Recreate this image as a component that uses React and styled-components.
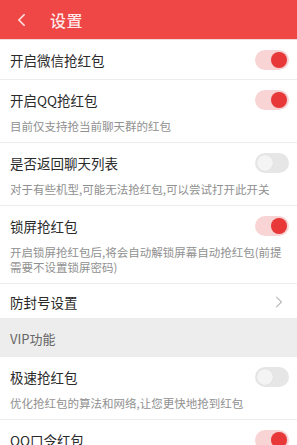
import styled, { createGlobalStyle } from 'styled-components';

const GlobalStyle = createGlobalStyle`
  html, body {
    margin: 0;
    padding: 0;
    background: #ffffff;
    font-family: "Noto Sans CJK SC", "Noto Sans", sans-serif;
  }
`;

const Page = styled.div`
  width: 297px;
  height: 445px;
  background: #fff;
  overflow: hidden;
`;

const Header = styled.header`
  height: 40px;
  background: #ef4646;
  display: flex;
  align-items: center;
  padding-left: 17px;
  gap: 24px;
  box-sizing: border-box;
  border-bottom: 1px solid #f0dada;
`;

const HeaderTitle = styled.h1`
  margin: 0;
  font-size: 16px;
  font-weight: 500;
  color: rgba(255, 255, 255, 0.9);
  letter-spacing: 0.5px;
`;

const Row = styled.div`
  padding: ${(p) => (p.$compact ? '8px 8px 6px 10px' : p.$hasSub ? '10px 8px 8px 10px' : '10px 8px 9px 10px')};
  border-bottom: 1px solid #ececec;
`;

const RowHead = styled.div`
  display: flex;
  align-items: center;
  justify-content: space-between;
  height: 20px;
`;

const Title = styled.span`
  font-size: 13.5px;
  color: #2a2a2a;
`;

const Sub = styled.p`
  margin: 9px 0 0;
  font-size: 11.5px;
  line-height: 15px;
  color: #909090;
  padding-right: 4px;
`;

const Section = styled.div`
  height: 38px;
  background: #ededed;
  display: flex;
  align-items: center;
  padding-left: 10px;
  font-size: 13px;
  color: #666;
`;

const Track = styled.div`
  position: relative;
  width: 34px;
  height: 20px;
  border-radius: 10px;
  background: ${(p) => (p.$on ? '#f9d4d4' : '#e6e6e6')};
`;

const Thumb = styled.div`
  position: absolute;
  top: 2px;
  left: ${(p) => (p.$on ? '16px' : '2px')};
  width: 16px;
  height: 16px;
  border-radius: 50%;
  background: ${(p) => (p.$on ? '#e83838' : '#f4f4f4')};
  box-shadow: 0 0 1px rgba(0, 0, 0, 0.12);
`;

function Toggle({ on }) {
  return (
    <Track $on={on}>
      <Thumb $on={on} />
    </Track>
  );
}

function Chevron({ color, width, height, stroke, right }) {
  return (
    <svg width={width} height={height} viewBox="0 0 10 16" fill="none">
      <path
        d={right ? 'M2 2 L8 8 L2 14' : 'M8 2 L2 8 L8 14'}
        stroke={color}
        strokeWidth={stroke}
        strokeLinecap="round"
        strokeLinejoin="round"
      />
    </svg>
  );
}

const ChevronWrap = styled.div`
  margin-right: 6px;
  display: flex;
`;

const items = [
  { title: '开启微信抢红包', on: true },
  { title: '开启QQ抢红包', on: true, sub: '目前仅支持抢当前聊天群的红包' },
  { title: '是否返回聊天列表', on: false, sub: '对于有些机型,可能无法抢红包,可以尝试打开此开关' },
  { title: '锁屏抢红包', on: true, sub: '开启锁屏抢红包后,将会自动解锁屏幕自动抢红包(前提需要不设置锁屏密码)' },
];

const vipItems = [
  { title: '极速抢红包', on: false, sub: '优化抢红包的算法和网络,让您更快地抢到红包' },
  { title: 'QQ口令红包', on: true },
];

function Item({ title, on, sub }) {
  return (
    <Row $hasSub={!!sub}>
      <RowHead>
        <Title>{title}</Title>
        <Toggle on={on} />
      </RowHead>
      {sub && <Sub>{sub}</Sub>}
    </Row>
  );
}

export default function App() {
  return (
    <Page>
      <GlobalStyle />
      <Header>
        <Chevron color="rgba(255,255,255,0.85)" width={9} height={14} stroke={2} />
        <HeaderTitle>设置</HeaderTitle>
      </Header>
      {items.map((it) => (
        <Item key={it.title} {...it} />
      ))}
      <Row $compact>
        <RowHead>
          <Title>防封号设置</Title>
          <ChevronWrap>
            <Chevron color="#b8b8b8" width={8} height={14} stroke={1.4} right />
          </ChevronWrap>
        </RowHead>
      </Row>
      <Section>VIP功能</Section>
      {vipItems.map((it) => (
        <Item key={it.title} {...it} />
      ))}
    </Page>
  );
}
